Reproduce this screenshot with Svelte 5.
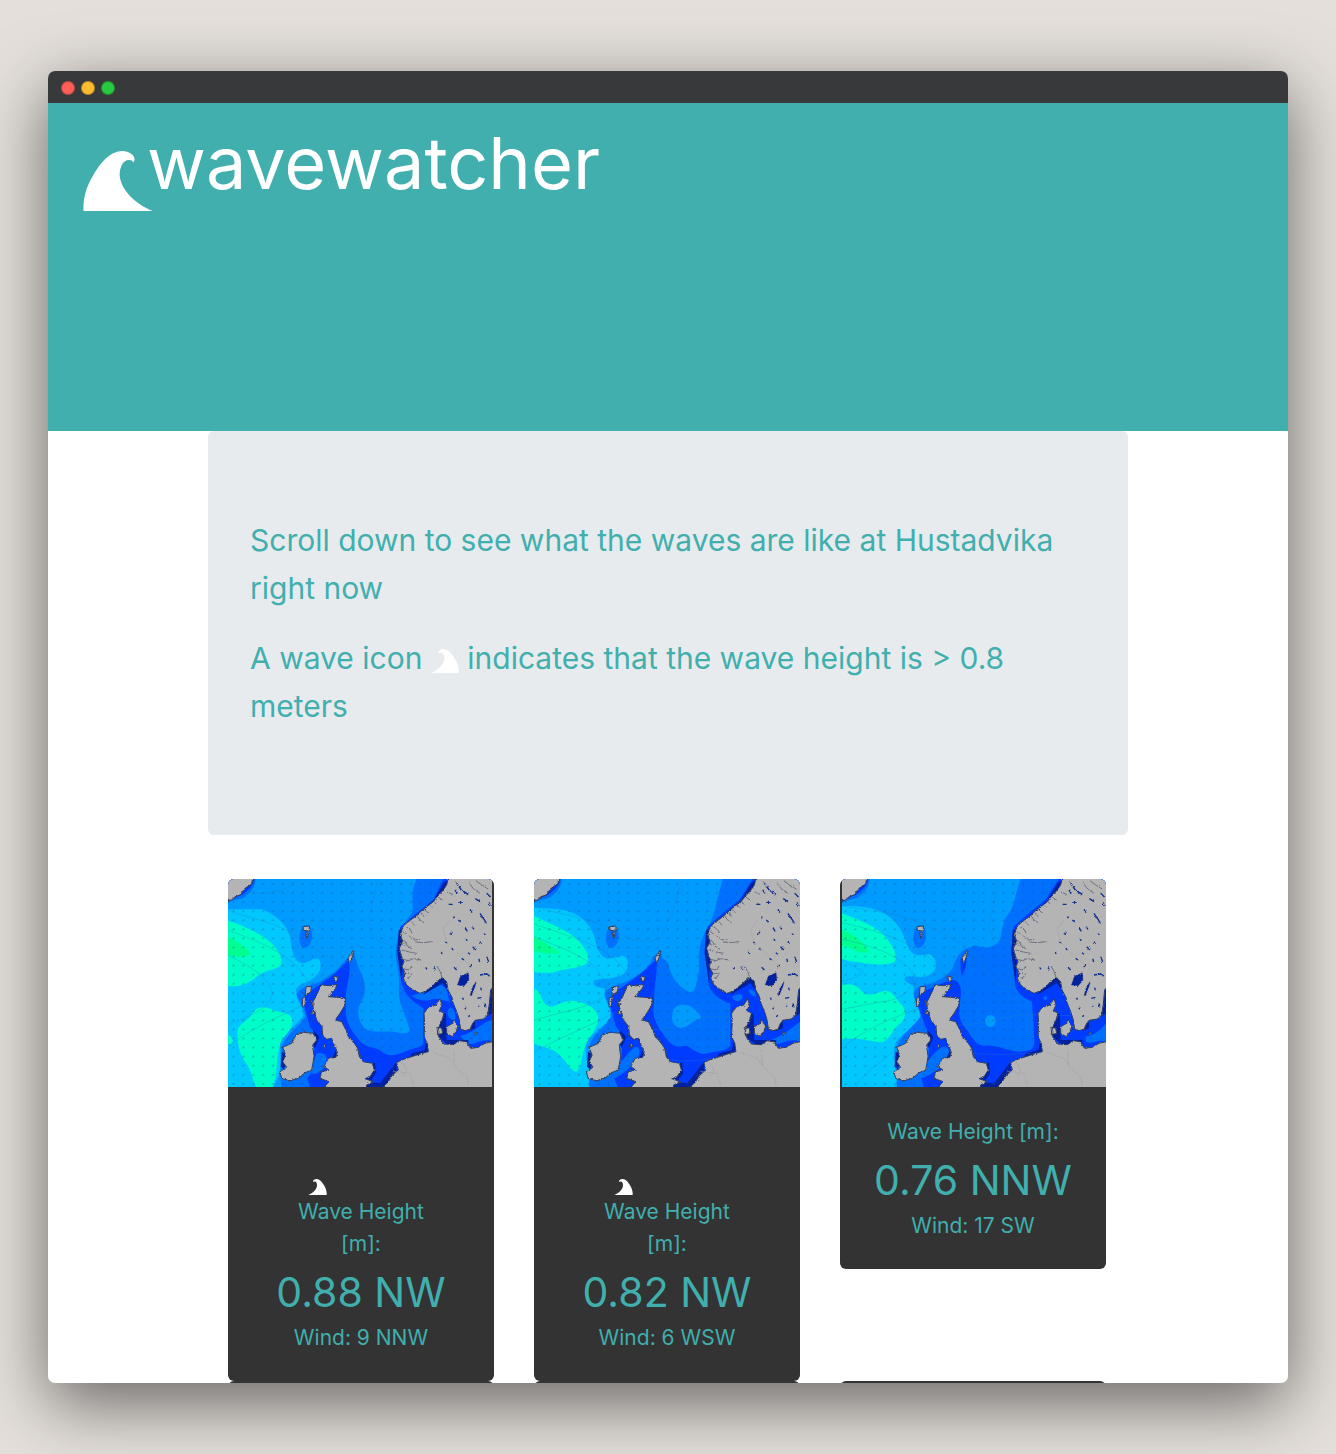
<script>
  const wave =
    'M131 453C129 419 138 382 158 349C181 307 211 274 245 272C262 271 285 282 285 297L283 307C277 299 271 298 262 300C249 304 240 322 240 345C243 388 287 432 340 453Z';

  const spots = [
    {
      height: '0.88 NW',
      wind: '9 NNW',
      high: true,
      inset: 'inset-right',
      view: '24 27 792 624',
      land: '',
      cyan: 'M24 118H125C160 130 200 160 210 200C215 240 222 280 250 280C270 276 285 260 297 268C308 288 300 310 280 325C260 340 235 340 228 360C228 400 255 410 248 440C225 470 190 490 180 520C180 560 185 590 175 620L160 651H24Z',
      aqua: 'M24 152C60 162 120 190 150 215C175 240 190 265 182 285C170 300 130 300 110 320C80 345 55 352 24 347ZM100 425C120 405 140 410 165 423C200 428 220 435 217 460C210 490 185 500 178 530C170 560 172 600 165 625L158 651H108C95 620 95 600 75 575C60 550 50 520 53 480C58 460 85 455 100 425ZM24 496Q38 500 38 512T24 522Z',
      green: 'M24 202C50 212 75 230 90 248C80 265 50 262 24 255Z',
      blue: 'M590 27C570 70 580 90 578 125C560 150 535 180 530 220C520 260 540 300 537 350C532 400 560 440 569 480C565 495 540 489 520 485C490 483 445 490 430 470C405 435 415 410 430 380C445 340 422 310 413 285L400 245L385 262L345 305L300 335C275 345 245 350 230 370C235 400 255 410 255 440C240 470 200 490 185 530C190 570 175 600 185 651H816V27Z',
      deep: 'M386 270C396 310 376 350 378 385C375 430 375 460 410 500C430 535 460 530 480 540C500 560 520 560 550 547C580 532 605 535 610 520L610 415C590 400 560 385 548 350L532 240L541 170L590 130L640 90L670 27H816V651H270L262 625L280 600L285 490L270 470L250 400L262 370L340 315Z',
      patches: 'M575 378C600 370 640 345 665 345C690 360 680 380 690 395C670 395 650 380 630 390C610 395 590 388 575 378ZM690 412Q706 420 706 440T690 445T690 412ZM720 498C760 490 790 455 816 450V515C790 500 760 530 740 520ZM290 550Q320 545 320 570T290 610T290 550Z',
      lines: 'M24 120C90 150 160 150 210 190C270 220 330 270 400 310C460 350 440 400 380 440M24 180C100 210 190 240 240 300C280 350 290 390 220 420C150 450 90 480 24 530M24 255C80 285 150 320 157 370C150 420 80 440 24 465M473 27C460 100 430 170 460 200C490 225 510 225 535 230M100 68C160 72 200 60 235 30'
    },
    {
      height: '0.82 NW',
      wind: '6 WSW',
      high: true,
      inset: '',
      view: '24 27 798 624',
      land: 'translate(-0.2 0) scale(1.0076 1)',
      cyan: 'M24 112C70 118 100 115 130 125C180 140 205 180 212 230C235 285 260 260 290 257C310 262 310 295 295 310C265 330 240 325 205 330C195 345 215 355 235 355C240 390 265 430 250 445C235 475 190 490 180 525C175 560 190 600 195 610L190 651H24Z',
      aqua: 'M24 138C70 160 120 180 150 205C180 235 195 265 182 280C150 300 110 295 85 307C60 310 40 308 24 305ZM24 358C50 360 40 405 75 410C100 405 120 388 145 393C190 400 215 420 217 445C215 480 180 510 175 535C165 570 165 595 150 606C130 600 120 570 95 550C70 530 50 535 24 520Z',
      green: 'M24 200C50 210 80 235 104 248C90 255 50 250 24 243Z',
      blue: 'M590 27C575 80 570 120 550 165C520 210 515 250 520 300C510 340 510 370 490 366C455 350 435 320 428 285C420 260 410 280 403 245L380 262C370 300 320 325 300 335C275 345 245 350 235 370C240 400 255 410 255 440C240 470 200 490 190 530V651H822V27Z',
      deep: 'M392 268C396 310 382 350 385 385C380 430 380 450 410 490C440 540 460 530 480 527C500 535 510 550 535 552C580 540 605 545 613 525L613 400C590 395 560 375 550 350L536 240L545 170L590 130L640 90L680 27H822V651H275L265 625L285 600L290 490L270 470L250 400L262 370L340 315Z',
      patches: 'M618 380Q655 362 648 388Q628 402 618 380ZM668 358Q690 360 690 380Q670 378 668 358ZM735 510C770 495 790 480 822 455V515C790 500 760 530 740 520ZM290 570Q335 510 340 540T290 610T290 570Z',
      spot: 'M440 430C442 402 475 400 495 410C515 425 530 440 522 446C500 450 490 470 465 474C440 470 435 450 440 430Z',
      lines: 'M24 110C120 140 200 140 270 185C330 225 380 215 400 205C430 160 450 90 470 27M24 162C130 200 220 220 280 280L320 330M24 200C100 230 180 260 215 300C240 340 255 370 220 390C160 420 90 430 24 450M24 545C130 490 210 460 270 425M370 475C440 490 460 450 530 440H610M400 565C470 580 550 570 620 555'
    },
    {
      height: '0.76 NNW',
      wind: '17 SW',
      high: false,
      inset: 'inset-left',
      view: '30 27 792 624',
      land: 'translate(6 0)',
      cyan: 'M30 108C80 108 130 112 160 132C190 150 210 180 222 215C235 260 260 260 290 252C313 260 320 290 300 310C270 330 245 315 220 320C210 335 235 340 245 350C245 400 270 430 265 455C245 475 210 485 190 520C180 570 190 600 195 620L190 651H30Z',
      aqua: 'M30 130C80 150 120 165 150 190C180 220 200 260 187 275C160 292 100 280 75 275C55 275 40 270 30 267ZM30 345C60 338 80 350 90 365C110 385 140 365 160 362C190 365 190 390 210 405C225 425 220 445 205 460C180 480 180 500 153 517C110 515 80 500 30 508Z',
      green: 'M30 180C60 190 95 215 112 244C90 258 60 235 30 225Z',
      blue: 'M566 27C545 80 555 100 520 145C500 190 520 220 470 232C440 235 430 220 420 230C390 235 370 260 365 290C345 320 320 330 300 340C275 345 250 350 245 370C245 400 270 410 265 440C245 470 210 490 195 530V651H822V27Z',
      deep: 'M360 330C385 330 390 360 385 385C385 410 375 430 390 460C420 500 430 530 460 527C500 525 530 545 560 545C590 540 605 545 607 515L600 395C580 385 560 375 550 350L538 240L545 170L590 130L640 90L680 27H822V651H275L268 625L288 600L292 490L280 470L255 400L262 370L340 335ZM386 265H403Q405 290 390 318Q384 300 386 265Z',
      patches: 'M760 500C790 495 805 480 822 460V515C800 505 780 525 762 515ZM290 570Q335 510 350 540T300 610T290 570ZM634 384a6 5 0 1 0 12 0a6 5 0 1 0 -12 0Z',
      spot: 'M459 453a16 18 0 1 0 32 0a16 18 0 1 0 -32 0Z',
      lines: 'M30 108C110 120 200 130 270 160C350 200 400 220 425 250C460 290 470 340 520 350H555M494 27C500 100 450 170 485 200C510 210 530 215 545 220M30 158C130 180 220 210 290 260L350 325M30 208C150 230 240 280 245 320C240 360 210 390 150 395L30 418M30 270L94 305Q80 325 30 333M30 535C90 480 190 440 260 415M380 465C460 465 530 430 600 435L730 437M390 545C470 560 550 550 620 550M70 651C100 600 160 570 200 530'
    }
  ];

  const shores =
    'M688 10L680 45L668 62L650 82L640 95L620 110L605 122L588 138L572 150L556 162L545 180L542 195L548 215L538 235L545 260L552 275L546 290L556 310L550 325L560 345L580 360L600 370L620 362L640 345L665 322L680 335L684 360L695 380L700 400L712 430L718 450L722 478L735 482L750 478L757 462L765 451L790 447L803 435L808 400L812 360L840 325V10H688Z' +
    'M660 386L666 405L658 422L672 430L666 450L657 470L652 490L660 508L672 522L700 524L718 512L738 515L752 535L775 532L795 520L840 510V670H470L505 635L515 618L535 600L530 578L545 570L575 560L600 552L625 545L622 520L612 500L614 460L612 430L625 412L648 405Z' +
    'M303 345L330 347L350 343L347 355L325 380L350 382L377 384L375 405L360 430L345 450L365 455L378 480L385 500L400 515L413 535L418 560L430 575L457 580L463 600L450 620L435 626L460 635L440 645L430 670H300L318 645L327 635L300 625L305 605L327 600L312 590L325 565L348 562L352 545L340 520L335 505L320 508L308 495L306 470L290 450L284 430L276 400L288 380Z' +
    'M228 495L250 487L280 490L290 510L278 525L282 560L275 600L255 608L235 625L210 632L185 625L180 605L200 592L188 575L197 555L188 532L215 520Z' +
    'M0 0H102L95 42L75 55L60 75L45 80L35 90L0 94Z' +
    'M680 470L698 460L700 449L714 468L708 485L697 500L680 490ZM650 473L665 474L668 490L655 494Z' +
    'M258 350L275 350L272 365L256 378ZM248 385L257 380L254 408L247 410ZM272 390L283 402L276 410ZM278 422L287 432L272 432ZM342 318L355 322L350 335L342 330Z' +
    'M398 242L402 244L394 270L388 278L384 262L392 255ZM249 170L268 168L268 184L250 180ZM256 188L265 190L262 207ZM765 486L774 490L766 497ZM312 522L318 528L310 534Z';

  const bigLakes = 'M712 345L722 318L745 308L747 330L733 347ZM750 377L757 352L769 334L765 350L755 374Z';

  const lakes =
    'M780 315L800 312L810 318M718 97L728 98M750 119L756 128M710 40L724 60L745 73M735 172L742 184M686 103H698M808 97L810 110M758 230L768 240M744 248L750 253M702 292L710 300M776 266L779 276M727 384L731 389M735 413L737 418M782 353L784 361M690 193L697 186M617 292L621 298M676 216L682 219M791 192L797 193M702 139L703 147M749 291L756 285M738 208L742 212M775 405L777 410M662 246L667 251M780 130L790 145L800 160M765 85L780 95M800 70L812 82M640 290L646 299M695 235L700 240M725 265L732 270M800 260L806 275M705 60L712 70M756 170L762 178M780 215L784 222M715 150L722 156M772 385L784 382M745 440L752 435M795 400L798 412';

  const fjords =
    'M542 205L556 215L562 228L578 238M545 240L568 246L590 250M568 198L584 210L600 208M548 268L566 272L580 266L604 270M586 216L610 218L635 215M558 170L572 180L576 190M590 135L600 150L612 158M612 118L624 128M640 92L650 104M552 297L568 300L575 288M560 325L570 320L576 308M666 322L660 304L652 290M681 66L700 74M706 34L718 48L722 58L742 77M748 40L760 56L780 70M768 32L785 45L806 58M548 185L560 192M545 222L556 226M556 312L566 310M575 155L584 166M604 128L612 140M628 105L638 112M655 82L668 90';

  const navy =
    'M670 40L690 27L695 60L650 105L590 145L600 125L640 92ZM628 345L665 312L690 325L692 372L668 340L610 374ZM536 180L552 175L545 340L532 250ZM655 440L678 430L680 520L655 500ZM680 510H745V525H680ZM740 470L765 455V475L745 482ZM440 580L465 578L468 610L450 636L480 640L530 575L530 605L495 651H440ZM280 480L298 500L285 535L275 510ZM575 550L615 540V555L570 562ZM622 500L635 545H612ZM800 440L816 350V430ZM348 540L360 550L335 570ZM185 545L205 555L192 598L182 590Z';

  const borders =
    'M690 150L668 180L680 215L720 255L760 295M520 605L570 610L580 651M700 540L705 590L740 620L745 651M640 548L690 565L705 590M545 575L560 600L550 620';
</script>

{#snippet waveIcon(kind)}
  <svg class="wave {kind}" viewBox="130 272 210 181" aria-hidden="true"><path d={wave} /></svg>
{/snippet}

<svelte:head><title>wavewatcher</title></svelte:head>

<div class="page">
  <div class="window">
    <div class="titlebar"><i class="close"></i><i class="minimise"></i><i class="zoom"></i></div>
    <header>
      {@render waveIcon('brand')}
      <h1>wavewatcher</h1>
    </header>
    <main>
      <section class="intro">
        <p>Scroll down to see what the waves are like at Hustadvika right now</p>
        <p>A wave icon {@render waveIcon('inline')} indicates that the wave height is &gt; 0.8 meters</p>
      </section>
      <section class="cards">
        {#each spots as spot, i}
          <article class="card">
            <div class="map {spot.inset}">
              <svg viewBox={spot.view} preserveAspectRatio="none" role="img" aria-label="Wave height map">
                <defs>
                  <pattern id="arrows{i}" x="24" y="27" width="29.6" height="27.3" patternUnits="userSpaceOnUse">
                    <path d="M13 17L18 13M16 13L18 13L18 16" stroke="#064d86" stroke-width="1.8" fill="none" opacity=".7" />
                  </pattern>
                  <filter id="rough{i}" x="-5%" y="-5%" width="110%" height="110%">
                    <feTurbulence type="fractalNoise" baseFrequency="0.25" numOctaves="2" seed="4" />
                    <feDisplacementMap in="SourceGraphic" scale="8" xChannelSelector="R" yChannelSelector="G" />
                  </filter>
                </defs>
                <rect x="24" y="27" width="798" height="624" fill="#009bff" />
                <path d={spot.cyan} fill="#00c8ff" />
                <path d={spot.aqua} fill="#00ffc8" />
                <path d={spot.green} fill="#00ff91" />
                <path d={spot.blue} fill="#0071ff" />
                <path d={spot.deep} fill="#003cff" />
                <path d={spot.patches} fill="#0071ff" />
                {#if spot.spot}<path d={spot.spot} fill="#009bff" />{/if}
                <g transform={spot.land}>
                  <ellipse cx="257" cy="200" rx="19" ry="34" fill="#0071ff" transform="rotate(6 257 200)" />
                  <path d="M24 100C40 85 55 92 75 80C95 65 105 50 107 27H24Z" fill="#0071ff" />
                  <path d="M24 95C40 82 65 80 80 63Q98 50 103 27H24Z" fill="#003cff" />
                  <path d={navy} fill="#0020a0" />
                </g>
                <rect x="24" y="27" width="798" height="624" fill="url(#arrows{i})" />
                <path d={spot.lines} fill="none" stroke="#287fb4" stroke-width="1.5" opacity=".6" />
                <g transform={spot.land} filter="url(#rough{i})">
                  <path d={shores} fill="#b4b4b4" stroke="#33405f" stroke-width="3" />
                  <path d={fjords} fill="none" stroke="#4b5064" stroke-width="2" />
                  <path d={bigLakes} fill="#0020a0" stroke="#333d66" stroke-width="1" />
                  <path d={lakes} fill="none" stroke="#14308f" stroke-width="4" />
                  <path d={borders} fill="none" stroke="#a4a4a4" stroke-width="2" />
                </g>
              </svg>
            </div>
            <div class="reading" class:high={spot.high}>
              {#if spot.high}<div class="marker">{@render waveIcon('small')}</div>{/if}
              <p class="label">Wave Height [m]:</p>
              <p class="value">{spot.height}</p>
              <p>Wind: {spot.wind}</p>
            </div>
          </article>
        {/each}
        {#each spots as spot}
          <article class="card upcoming" aria-label="Next reading"></article>
        {/each}
      </section>
    </main>
  </div>
</div>

<style>
  :global(body) {
    margin: 0;
    background: #e4dfda;
  }
  .page {
    box-sizing: border-box;
    height: 100vh;
    padding: 71px 48px;
    overflow: hidden;
    color: #40afae;
    font-family: Inter, 'Liberation Sans', sans-serif;
  }
  .window {
    height: 100%;
    overflow: hidden;
    background: #fff;
    border-radius: 7px;
    box-shadow: 0 20px 68px rgba(0, 0, 0, 0.55);
  }
  .titlebar {
    display: flex;
    align-items: center;
    gap: 6px;
    height: 32px;
    padding: 2px 13px 0;
    box-sizing: border-box;
    background: #38393b;
  }
  .titlebar i {
    box-sizing: border-box;
    width: 14px;
    height: 14px;
    border: 1px solid rgba(0, 0, 0, 0.25);
    border-radius: 50%;
  }
  .close { background: #ff5f57; }
  .minimise { background: #ffbd2e; }
  .zoom { background: #28ca41; }
  header {
    display: flex;
    align-items: flex-start;
    box-sizing: border-box;
    height: 328px;
    padding: 12px 35px;
    background: #40afae;
    color: #fff;
  }
  .wave { fill: #fff; flex: none; }
  .brand {
    width: 70px;
    height: 60px;
    margin-top: 36px;
    margin-right: -6px;
  }
  h1 {
    margin: 0;
    font-size: 72px;
    line-height: 96px;
    font-weight: 400;
  }
  p { margin: 0; }
  main {
    width: calc(100% - 320px);
    margin: 0 auto;
  }
  .intro {
    padding: 85px 42px 83px;
    background: #e8ebee;
    border-radius: 6px;
    font-size: 30px;
    line-height: 48px;
  }
  .intro p { margin-bottom: 22px; }
  .inline {
    width: 28px;
    height: 24px;
    vertical-align: -4px;
    transform: scaleX(-1);
  }
  .cards {
    display: grid;
    grid-template-columns: repeat(3, 1fr);
    align-items: start;
    column-gap: 40px;
    padding: 44px 22px 0 20px;
  }
  .card {
    overflow: hidden;
    background: #333;
    border-radius: 6px;
  }
  .map svg {
    display: block;
    width: 100%;
    height: 208px;
  }
  .inset-right { padding-right: 2px; }
  .inset-left { padding-left: 2px; }
  .reading {
    padding: 28px 28px 27px;
    text-align: center;
    font-size: 21px;
    line-height: 32px;
  }
  .marker {
    display: flex;
    align-items: flex-end;
    height: 80px;
    padding-left: 52px;
  }
  .small {
    width: 19px;
    height: 16px;
    transform: scaleX(-1);
  }
  .label { padding-top: 1px; }
  .high .label {
    max-width: 160px;
    margin: 0 auto;
  }
  .reading .value {
    padding: 3px 0 1px;
    font-size: 41px;
    line-height: 58px;
    white-space: nowrap;
  }
  .upcoming { height: 390px; }
</style>
